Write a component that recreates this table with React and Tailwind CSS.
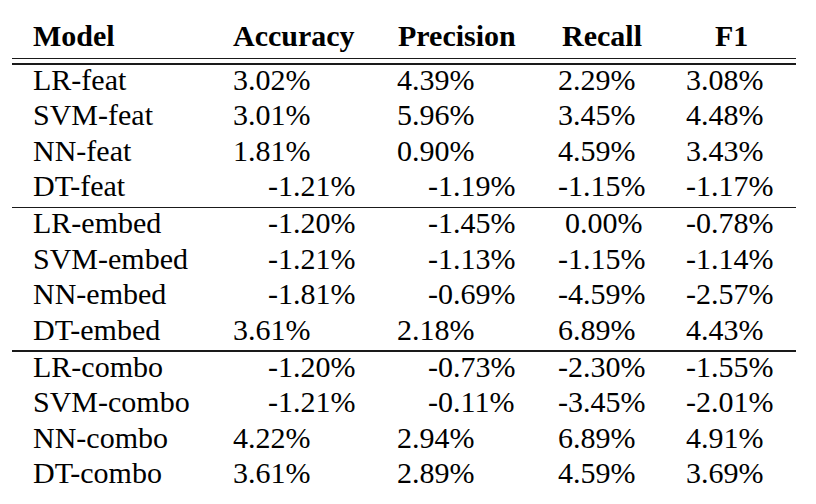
import React from "react";

// results table, same layout as the paper figure
const groups = [
  [
    ["LR-feat", "3.02%", "4.39%", "2.29%", "3.08%"],
    ["SVM-feat", "3.01%", "5.96%", "3.45%", "4.48%"],
    ["NN-feat", "1.81%", "0.90%", "4.59%", "3.43%"],
    ["DT-feat", "-1.21%", "-1.19%", "-1.15%", "-1.17%"],
  ],
  [
    ["LR-embed", "-1.20%", "-1.45%", "0.00%", "-0.78%"],
    ["SVM-embed", "-1.21%", "-1.13%", "-1.15%", "-1.14%"],
    ["NN-embed", "-1.81%", "-0.69%", "-4.59%", "-2.57%"],
    ["DT-embed", "3.61%", "2.18%", "6.89%", "4.43%"],
  ],
  [
    ["LR-combo", "-1.20%", "-0.73%", "-2.30%", "-1.55%"],
    ["SVM-combo", "-1.21%", "-0.11%", "-3.45%", "-2.01%"],
    ["NN-combo", "4.22%", "2.94%", "6.89%", "4.91%"],
    ["DT-combo", "3.61%", "2.89%", "4.59%", "3.69%"],
  ],
];

const gridCols = "grid grid-cols-[221px_164px_161px_128px_110px]";

// negative numbers sit further right in the first two metric columns
const cellPad = (col, value) => {
  if (col === 1 && value.startsWith("-")) return "pl-[35px]";
  if (col === 2 && value.startsWith("-")) return "pl-[31px]";
  if (col === 3 && value === "0.00%") return "pl-[7px]";
  return "";
};

const Rule = ({ className = "" }) => (
  <div className={"h-[1.5px] bg-[#1a1a1a] " + className} />
);

export default function App() {
  return (
    <div className="w-[816px] h-[504px] bg-white text-black overflow-hidden pt-[21px]">
      <div className="ml-[12px] w-[784px] text-[30px] font-['Liberation_Serif']">
        <div className={gridCols + " h-[36.5px] leading-[30px] font-bold"}>
          <div className="pl-[21px]">Model</div>
          <div>Accuracy</div>
          <div className="pl-[1px]">Precision</div>
          <div className="pl-[4px]">Recall</div>
          <div className="pl-[29px]">F1</div>
        </div>
        <Rule />
        <Rule className="mt-[4px]" />

        {groups.map((rows, gi) => (
          <div key={gi}>
            {gi > 0 && <Rule />}
            {rows.map((row) => (
              <div key={row[0]} className={gridCols + " h-[35.5px] leading-[30px]"}>
                <div className="pl-[21px]">{row[0]}</div>
                {row.slice(1).map((v, ci) => (
                  <div key={ci} className={cellPad(ci + 1, v)}>
                    {v}
                  </div>
                ))}
              </div>
            ))}
          </div>
        ))}
      </div>
    </div>
  );
}
